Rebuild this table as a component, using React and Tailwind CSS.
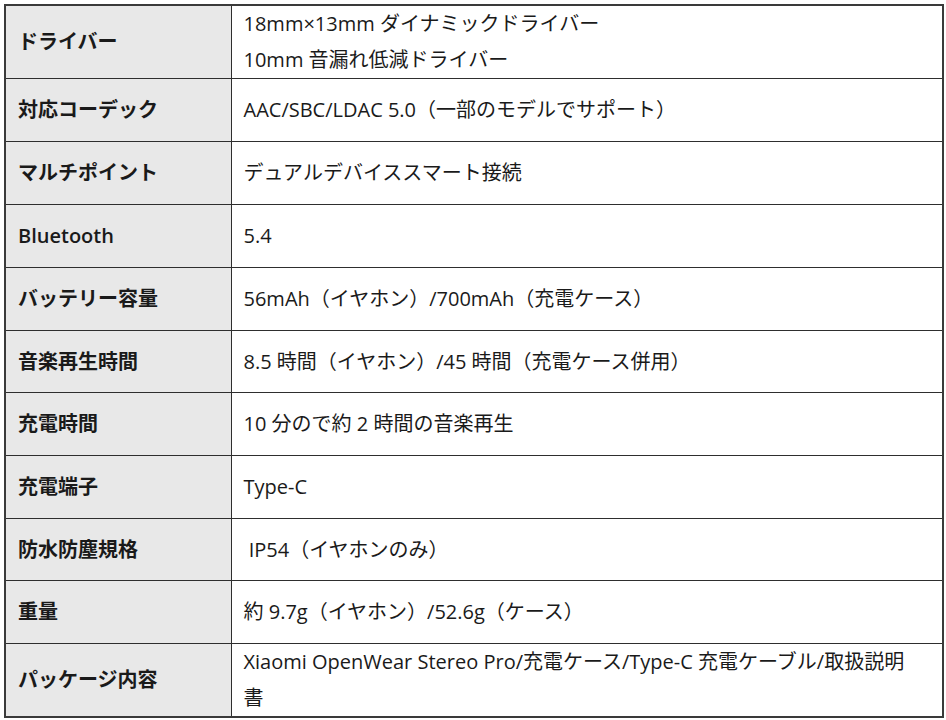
import React from "react";

const rows = [
  { label: "ドライバー", value: ["18mm×13mm ダイナミックドライバー", "10mm 音漏れ低減ドライバー"], h: "h-[73px]" },
  { label: "対応コーデック", value: ["AAC/SBC/LDAC 5.0（一部のモデルでサポート）"], h: "h-[63px]" },
  { label: "マルチポイント", value: ["デュアルデバイススマート接続"], h: "h-[63px]" },
  { label: "Bluetooth", value: ["5.4"], h: "h-[63px]" },
  { label: "バッテリー容量", value: ["56mAh（イヤホン）/700mAh（充電ケース）"], h: "h-[63px]" },
  { label: "音楽再生時間", value: ["8.5 時間（イヤホン）/45 時間（充電ケース併用）"], h: "h-[62px]" },
  { label: "充電時間", value: ["10 分ので約 2 時間の音楽再生"], h: "h-[63px]" },
  { label: "充電端子", value: ["Type-C"], h: "h-[63px]" },
  { label: "防水防塵規格", value: ["\u00a0IP54（イヤホンのみ）"], h: "h-[62px]" },
  { label: "重量", value: ["約 9.7g（イヤホン）/52.6g（ケース）"], h: "h-[63px]" },
  { label: "パッケージ内容", value: ["Xiaomi OpenWear Stereo Pro/充電ケース/Type-C 充電ケーブル/取扱説明", "書"], h: "h-[73px]" },
];

export default function App() {
  return (
    <div
      className="w-[946px] h-[720px] overflow-hidden bg-white pt-[4px] pl-[4px] text-[#1a1a1a]"
      style={{ fontFamily: '"Open Sans", "Noto Sans CJK JP", sans-serif' }}
    >
      <table className="w-[940px] border-collapse border-2 border-[#3a3a3a] table-fixed">
        <colgroup>
          <col className="w-[226px]" />
          <col />
        </colgroup>
        <tbody>
          {rows.map((r, i) => (
            <tr key={i} className={r.h}>
              <td className="border border-[#2e2e2e] bg-[#e8e8e8] p-0 pl-[12px] align-middle text-[20px] font-semibold leading-none">
                {r.label}
              </td>
              <td className="border border-[#2e2e2e] bg-white p-0 pl-[12px] align-middle text-[20px] leading-[36px]">
                {r.value.map((v, j) => (
                  <div key={j} className="whitespace-nowrap">{v}</div>
                ))}
              </td>
            </tr>
          ))}
        </tbody>
      </table>
    </div>
  );
}
